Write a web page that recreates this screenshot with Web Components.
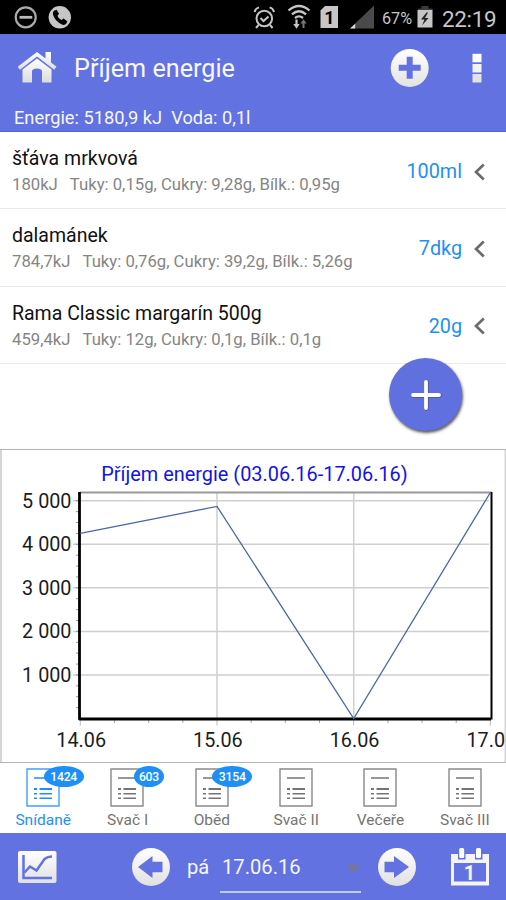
<!DOCTYPE html>
<html lang="cs">
<head>
<meta charset="utf-8">
<title>Příjem energie</title>
<style>
    body {
        margin: 0;
        background: #fff;
        font-family: Roboto, "Open Sans", sans-serif;
    }
</style>
</head>
<body>
<energy-app></energy-app>

<script>
// Barre d'état du téléphone
class StatusBar extends HTMLElement {
    constructor() {
        super();
        this.attachShadow({ mode: 'open' });
    }
    connectedCallback() {
        this.shadowRoot.innerHTML = `
        <style>
            :host { display: flex; align-items: center; height: 34px; background: #000; color: #c6c6c6; box-sizing: border-box; padding: 0 10px 0 14px; }
            svg { display: block; flex: none; }
            .space { flex: 1; }
            .percent { font-size: 16.200px; line-height: 34px; margin-left: 7px; padding-top: 3px; width: 32px; white-space: nowrap; }
            .time { font-size: 22.400px; line-height: 34px; margin-left: 8px; padding-top: 3px; letter-spacing: -0.300px; width: 54px; white-space: nowrap; }
        </style>
        <svg width="58" height="34" viewBox="14 0 58 34">
            <circle cx="25.700" cy="17.300" r="10" fill="none" stroke="#aaa" stroke-width="2.200"/>
            <path d="M19.500 17.300h12.800" stroke="#bbb" stroke-width="2.800"/>
            <circle cx="59.800" cy="17.300" r="11.200" fill="#c6c6c6"/>
            <path d="M54.400 10.600l2.200-.9 2.500 4-1.600 2c.8 2 2.200 3.500 4 4.400l2.100-1.500 3.700 2.700-.9 2.200c-1 1.500-3 1.800-5 .8-4-2-7.200-5.500-8.300-9.500-.4-1.800 0-3.500 1.300-4.200z" fill="#000"/>
        </svg>
        <div class="space"></div>
        <svg width="123" height="34" viewBox="252 0 123 34">
            <g fill="none" stroke="#c6c6c6" stroke-width="2">
                <circle cx="264.300" cy="18.500" r="7.800"/>
                <path d="M260.500 18l3 3 5-4.500M258.600 25l-2.600 3M270 25l2.600 3M254.600 12c.5-2.500 2-4 4.400-4.600M274 12c-.5-2.500-2-4-4.400-4.600"/>
                <path d="M288.500 10.500q10.500-9 21 0M292 14.300q7-6 14 0M295 18q4-3.200 8 0" stroke-width="2.300"/>
                <path d="M296.500 19.500v6" stroke-width="2.200"/>
                <path d="M303.500 28v-6" stroke="#777" stroke-width="2"/>
            </g>
            <path d="M293.300 24h6.400l-3.200 4.700z" fill="#c6c6c6"/>
            <path d="M300.400 23.500h6.200l-3.100-4.200z" fill="#777"/>
            <path d="M325 6h13v22h-17.500V10.500z" fill="#c6c6c6"/>
            <text x="329.500" y="24" font-size="18" font-weight="700" text-anchor="middle" fill="#000">1</text>
            <path d="M350 28.500L374 5.500v23z" fill="#4a4a4a"/>
            <path d="M350 28.500l5.200-4.800v4.800z" fill="#d6d6d6"/>
        </svg>
        <span class="percent">67%</span>
        <svg width="18" height="34" viewBox="416 0 18 34" style="margin-left:2px">
            <path d="M418 11V8.500h3.500V6h7v2.500h4V11z" fill="#3c3c3c"/>
            <path d="M417.500 10h15v17.500h-15z" fill="#c6c6c6"/>
            <path d="M426.500 12.500l-5.500 7h3.500l-2.500 6 6.500-7.500h-3.500l3-5.500z" fill="#222"/>
        </svg>
        <span class="time">22:19</span>`;
    }
}
customElements.define('status-bar', StatusBar);


// En-tête : titre, actions et totaux de la journée
class AppHeader extends HTMLElement {
    constructor() {
        super();
        this.attachShadow({ mode: 'open' });
    }
    connectedCallback() {
        this.shadowRoot.innerHTML = `
        <style>
            :host { display: block; height: 98px; background: #6272e0; color: #f6f7ff; box-sizing: border-box; border-bottom: 1px solid #5262d8; }
            .bar { display: flex; align-items: center; height: 68px; padding: 0 23px 0 18px; }
            .title { flex: 1; margin-left: 17px; font-size: 25.200px; line-height: 68px; padding-top: 1px; white-space: nowrap; }
            .totals { padding-left: 14px; font-size: 18.250px; line-height: 31px; white-space: pre; }
            svg { display: block; }
        </style>
        <div class="bar">
            <svg width="39" height="34" viewBox="0 0 39 34">
                <defs><linearGradient id="g" x2="0" y2="1"><stop offset="0" stop-color="#fff"/><stop offset="1" stop-color="#dcdcdc"/></linearGradient></defs>
                <path d="M19 1L27.500 7.500V1H33v10.500l5.500 4.300-2.300 3L19 5.500 2 18.800l-2.300-3z" fill="url(#g)"/>
                <path d="M19 7.500L33.500 18.500v13H24V20q-.5-2.500-5-2.500T14 20v11.500H4.500v-13z" fill="url(#g)"/>
            </svg>
            <div class="title"><slot name="title"></slot></div>
            <svg width="40" height="40" viewBox="0 0 40 40" style="margin-right:42px">
                <defs><linearGradient id="c" x2="0" y2="1"><stop offset="0" stop-color="#fff"/><stop offset="1" stop-color="#e2e2e2"/></linearGradient></defs>
                <circle cx="20.700" cy="20" r="19" fill="url(#c)"/>
                <path d="M17.700 8.800h6v8h8v6h-8v8h-6v-8h-8v-6h8z" fill="#6272e0"/>
            </svg>
            <svg width="12" height="30" viewBox="0 0 12 30">
                <path d="M1.500.8h9v8.500h-9z" fill="#fff"/>
                <path d="M1.500 11h9v8.500h-9z" fill="#f3f3f3"/>
                <path d="M1.500 21h9v8.500h-9z" fill="#e2e2e2"/>
            </svg>
        </div>
        <div class="totals"><slot></slot></div>`;
    }
}
customElements.define('app-header', AppHeader);


// Une ligne de la liste des aliments
class FoodItem extends HTMLElement {
    constructor() {
        super();
        this.attachShadow({ mode: 'open' });
    }
    connectedCallback() {
        this.shadowRoot.innerHTML = `
        <style>
            :host { display: flex; align-items: center; height: 77.300px; box-sizing: border-box; border-bottom: 1.500px solid #ebebeb; padding: 0 20px 0 12px; }
            .text { flex: 1; padding-top: 3px; }
            .name { font-size: 19.500px; line-height: 26px; color: #111; }
            .info { display: flex; gap: 12px; font-size: 16.700px; line-height: 25px; color: #858585; }
            .amount { font-size: 19.800px; line-height: 26px; color: #1e90f5; margin-right: 12px; padding-top: 4px; }
            svg { display: block; padding-top: 3px; }
        </style>
        <div class="text">
            <div class="name"><slot></slot></div>
            <div class="info"><span>${this.getAttribute('energy')}</span><span>${this.getAttribute('detail')}</span></div>
        </div>
        <div class="amount">${this.getAttribute('amount')}</div>
        <svg width="12" height="18" viewBox="0 0 12 18"><path d="M9.800 1.500L2 9l7.800 7.500" fill="none" stroke="#6c6c6c" stroke-width="2.700"/></svg>`;
    }
}
customElements.define('food-item', FoodItem);


// Bouton rond flottant
class AddButton extends HTMLElement {
    constructor() {
        super();
        this.attachShadow({ mode: 'open' });
    }
    connectedCallback() {
        this.shadowRoot.innerHTML = `
        <style>
            :host { display: flex; align-items: center; justify-content: center; width: 73px; height: 73px; border-radius: 50%; background: #6070df; box-shadow: 1px 2px 3px rgba(0,0,0,.65); }
        </style>
        <svg width="32" height="32" viewBox="0 0 32 32">
            <path d="M16 3v26M3 16h26" stroke="#4e5a9c" stroke-width="4.800" stroke-linecap="round" transform="translate(.4 .6)"/>
            <path d="M16 3v26M3 16h26" stroke="#fff" stroke-width="3.800" stroke-linecap="round"/>
        </svg>`;
    }
}
customElements.define('add-button', AddButton);


// Graphique linéaire
class LineChart extends HTMLElement {
    constructor() {
        super();
        this.attachShadow({ mode: 'open' });
    }
    connectedCallback() {
        const values = this.getAttribute('values').split(',').map(Number);
        const labels = this.getAttribute('labels').split(',');
        const left = 80.300, step = 136.700, top = 43.500, zero = 269.500;
        const x = i => left + i * step;
        const y = v => zero - v * 0.04355;

        let grid = '';
        let texts = '';
        for (let v = 1000; v <= 5000; v += 1000) {
            grid += `<path d="M73 ${y(v)}H489" stroke="#cfcfcf" stroke-width="1.500"/>`;
            texts += `<text x="71.500" y="${y(v) + 7}" text-anchor="end">${v / 1000} 000</text>`;
        }
        for (let v = 250; v <= 5000; v += 250) {
            grid += `<path d="M76 ${y(v)}h3" stroke="#999"/>`;
        }
        labels.forEach((label, i) => {
            if (i > 0 && i < labels.length - 1) {
                grid += `<path d="M${x(i)} ${top}V${zero}" stroke="#cfcfcf" stroke-width="1.500"/>`;
            }
            grid += `<path d="M${x(i)} ${zero}v7" stroke="#bbb"/>`;
            for (let k = 1; k < 4 && i < labels.length - 1; k++) {
                grid += `<path d="M${x(i) + k * step / 4} ${zero}v4.500" stroke="#aaa"/>`;
            }
            texts += `<text x="${x(i) + 0.900}" y="298" text-anchor="middle">${label}</text>`;
        });
        const points = values.map((v, i) => `${x(i)},${y(v)}`).join(' ');

        this.shadowRoot.innerHTML = `
        <style>
            :host { display: block; height: 314px; }
            svg { display: block; }
            text { font-size: 19.800px; fill: #1c1c1c; }
            .title { font-size: 19.900px; fill: #1313e4; }
        </style>
        <svg width="506" height="314">
            <path d="M1 0V314M505.500 0V314" stroke="#d6d6d6" stroke-width="2"/>
            <path d="M0 .5H506M0 313.500H506" stroke="#b4b4b4"/>
            <text class="title" x="254.500" y="32" text-anchor="middle">${this.getAttribute('caption')}</text>
            ${grid}
            <path d="M80 43.500H492" stroke="#999" stroke-width="2"/>
            <path d="M79.500 43V270H491" fill="none" stroke="#000" stroke-width="2.800" stroke-linejoin="round"/>
            <path d="M491.500 43V270.500" stroke="#000" stroke-width="2"/>
            <polyline points="${points}" fill="none" stroke="#4c66a6" stroke-width="1.300"/>
            ${texts}
        </svg>`;
    }
}
customElements.define('line-chart', LineChart);


// Onglet d'un repas, avec badge optionnel
class MealTab extends HTMLElement {
    constructor() {
        super();
        this.attachShadow({ mode: 'open' });
    }
    connectedCallback() {
        const badge = this.getAttribute('badge');
        this.shadowRoot.innerHTML = `
        <style>
            :host { display: flex; flex-direction: column; align-items: center; flex: 1 1 0; min-width: 0; color: #747474; padding-top: 5px; }
            :host([active]) { color: #1e8ff5; }
            .icon { position: relative; width: 34px; height: 39px; }
            .badge { position: absolute; top: -2px; transform: translateX(-50%); height: 21px; line-height: 22px; border-radius: 50%; background: #1e8ff5; color: #fff; font-size: 12.200px; font-weight: 500; text-align: center; letter-spacing: -.2px; }
            .label { font-size: 15.500px; line-height: 22px; margin-top: 2px; white-space: nowrap; }
            svg { display: block; }
        </style>
        <div class="icon">
            <svg width="34" height="39" viewBox="0 0 34 39" fill="none" stroke="currentColor">
                <path d="M1 1h32v37H1z" stroke-width="1.400" opacity=".85"/>
                <path d="M8 10h18" stroke-width="1.500"/>
                <path d="M8 21h3M13.500 21h12.500" stroke-width="2"/>
                <path d="M8 25.800h3M13.500 25.800h12.500M8 30.300h3M13.500 30.300h12.500" stroke-width="1.500"/>
            </svg>
            ${badge ? `<div class="badge" style="width:${badge.length > 3 ? 40 : 30}px;left:${badge.length > 3 ? 37.500 : 38.500}px">${badge}</div>` : ''}
        </div>
        <div class="label"><slot></slot></div>`;
    }
}
customElements.define('meal-tab', MealTab);


// Barre du bas : navigation par date
class DateBar extends HTMLElement {
    constructor() {
        super();
        this.attachShadow({ mode: 'open' });
    }
    connectedCallback() {
        this.shadowRoot.innerHTML = `
        <style>
            :host { display: flex; align-items: center; height: 67px; background: #6272e0; color: #f6f7ff; box-sizing: border-box; padding: 0 16px 0 18px; font-size: 20.200px; }
            svg { display: block; flex: none; }
            .day { margin-left: 16px; width: 33px; line-height: 24px; padding-top: 1px; }
            .date { display: flex; align-items: center; justify-content: space-between; box-sizing: border-box; width: 141px; height: 43px; margin-top: 10px; padding: 0 1px 8px 2px; border-bottom: 2px solid #c3c9f2; }
        </style>
        <svg width="39" height="34" viewBox="0 0 39 34">
            <defs><linearGradient id="g" x2="0" y2="1"><stop offset="0" stop-color="#fff"/><stop offset="1" stop-color="#e0e0e0"/></linearGradient></defs>
            <rect y="1" width="38.500" height="32" rx="2" fill="url(#g)"/>
            <path d="M5.500 5V28H34" fill="none" stroke="#6272e0" stroke-width="2.500"/>
            <path d="M6.500 22.500l5.500-6 6.500 4 8-11.500q3-2.500 7.500-2.500" fill="none" stroke="#6272e0" stroke-width="2.500"/>
        </svg>
        <svg width="40" height="40" viewBox="0 0 40 40" style="margin-left:74px">
            <defs><linearGradient id="g2" x2="0" y2="1"><stop offset="0" stop-color="#fff"/><stop offset="1" stop-color="#e0e0e0"/></linearGradient></defs>
            <circle cx="20" cy="20" r="19" fill="url(#g2)"/>
            <path d="M7 20L21.500 9v5.800H31.500v10.500H21.500V31z" fill="#6272e0"/>
        </svg>
        <span class="day">pá</span>
        <div class="date"><span>17.06.16</span>
            <svg width="14" height="8" viewBox="0 0 14 8" style="margin-top:4px"><path d="M0 0h14L7 7.500z" fill="#77778f"/></svg>
        </div>
        <svg width="40" height="40" viewBox="0 0 40 40" style="margin-left:16px">
            <defs><linearGradient id="g3" x2="0" y2="1"><stop offset="0" stop-color="#fff"/><stop offset="1" stop-color="#e0e0e0"/></linearGradient></defs>
            <circle cx="20" cy="20" r="19" fill="url(#g3)"/>
            <path d="M32 20L17 9v5.800H7.500v10.500H17V31z" fill="#6272e0"/>
        </svg>
        <div style="flex:1"></div>
        <svg width="40" height="38" viewBox="0 0 40 38">
            <path d="M1 6h38v31.500H1z" fill="#f4f4f8"/>
            <path d="M4 15h32v18.500H4z" fill="#6272e0"/>
            <path d="M8 3.500h7.500v8H8zM25 3.500h7.500v8H25z" fill="#6272e0"/>
            <rect x="9.200" y="0" width="5" height="10" rx="1.500" fill="#fff"/>
            <rect x="26" y="0" width="5" height="10" rx="1.500" fill="#fff"/>
            <text x="19.500" y="32" font-size="20" font-weight="700" text-anchor="middle" fill="#f4f4f8">1</text>
        </svg>`;
    }
}
customElements.define('date-bar', DateBar);


class EnergyApp extends HTMLElement {
    constructor() {
        super();
        this.attachShadow({ mode: 'open' });
    }
    connectedCallback() {
        this.shadowRoot.innerHTML = `
        <style>
            :host { display: flex; flex-direction: column; width: 506px; height: 900px; overflow: hidden; background: #fff; }
            .list { position: relative; flex: 1; }
            add-button { position: absolute; right: 44px; bottom: 18px; }
            .tabs { display: flex; height: 70px; padding-left: 1px; margin-right: -1px; }
        </style>
        <status-bar></status-bar>
        <app-header><span slot="title">Příjem energie</span>Energie: 5180,9 kJ  Voda: 0,1l</app-header>
        <div class="list">
            <food-item energy="180kJ" detail="Tuky: 0,15g, Cukry: 9,28g, Bílk.: 0,95g" amount="100ml">šťáva mrkvová</food-item>
            <food-item energy="784,7kJ" detail="Tuky: 0,76g, Cukry: 39,2g, Bílk.: 5,26g" amount="7dkg">dalamánek</food-item>
            <food-item energy="459,4kJ" detail="Tuky: 12g, Cukry: 0,1g, Bílk.: 0,1g" amount="20g">Rama Classic margarín 500g</food-item>
            <add-button></add-button>
        </div>
        <line-chart caption="Příjem energie (03.06.16-17.06.16)" values="4250,4870,0,5190" labels="14.06,15.06,16.06,17.06"></line-chart>
        <div class="tabs">
            <meal-tab active badge="1424">Snídaně</meal-tab>
            <meal-tab badge="603">Svač I</meal-tab>
            <meal-tab badge="3154">Oběd</meal-tab>
            <meal-tab>Svač II</meal-tab>
            <meal-tab>Večeře</meal-tab>
            <meal-tab>Svač III</meal-tab>
        </div>
        <date-bar></date-bar>`;
    }
}
customElements.define('energy-app', EnergyApp);
</script>
</body>
</html>
